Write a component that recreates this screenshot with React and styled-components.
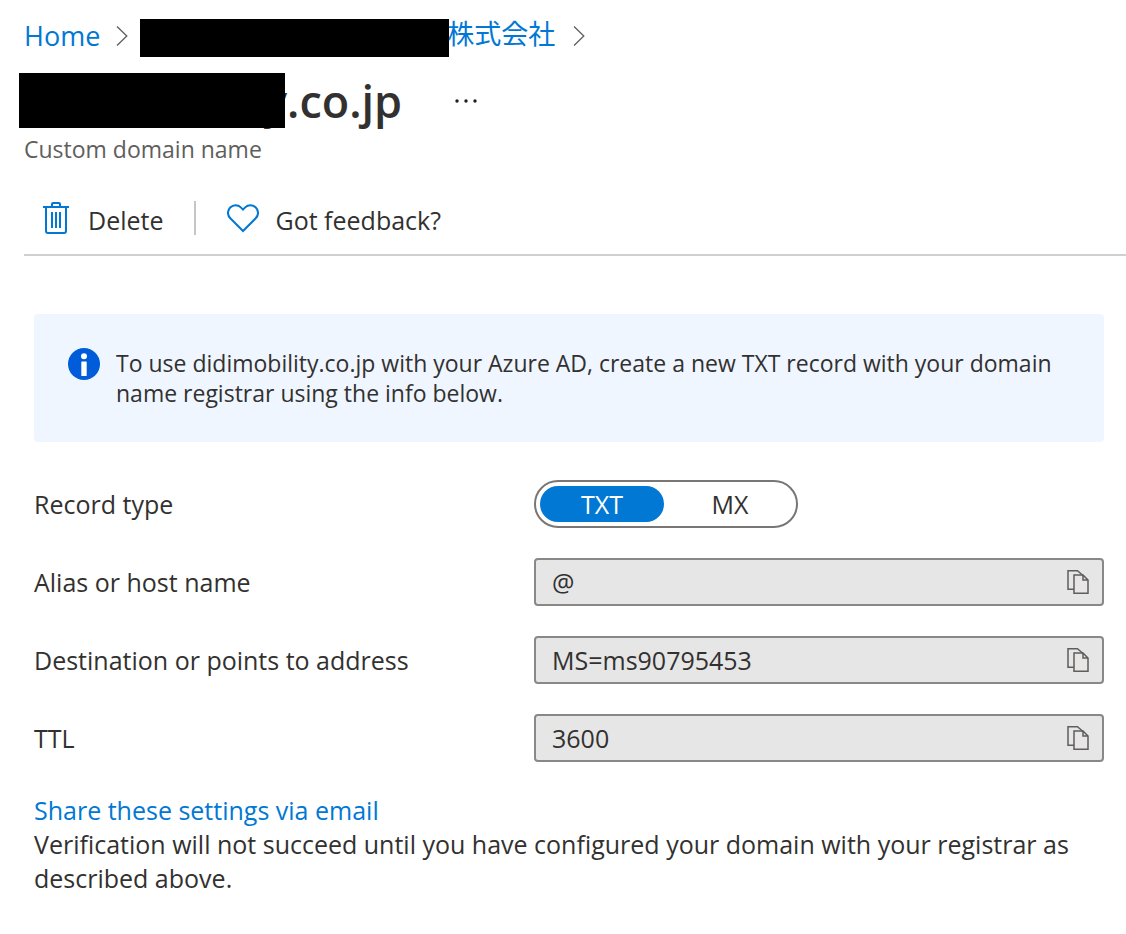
import React, { useState } from 'react';
import styled, { createGlobalStyle } from 'styled-components';

const GlobalStyle = createGlobalStyle`
  * {
    box-sizing: border-box;
  }

  body {
    margin: 0;
    background: #fff;
    color: #323130;
    font-family: 'Open Sans', 'Noto Sans CJK JP', sans-serif;
    font-size: 25px;
    line-height: 34px;
  }

  button,
  input {
    font: inherit;
    color: inherit;
  }
`;

const Page = styled.div`
  padding: 16px 0 36px;
`;

const Breadcrumb = styled.nav`
  display: flex;
  align-items: center;
  height: 40px;
  padding-left: 24px;
`;

const Crumb = styled.a`
  display: flex;
  align-items: center;
  color: #0078d4;
  font-size: 27px;
  line-height: 36px;
  text-decoration: none;
`;

const Chevron = styled.svg`
  flex: none;
  width: 12px;
  height: 20px;
  margin: 0 12px 0 16px;
`;

const Redacted = styled.span`
  position: relative;
  z-index: 1;
  flex: none;
  width: ${({ $width }) => $width}px;
  height: ${({ $height }) => $height}px;
  margin-right: -${({ $overlap }) => $overlap}px;
  background: #000;
`;

const CompanyCrumb = styled(Crumb)`
  align-items: flex-start;
  height: 34px;
  margin-right: 2px;
  line-height: 30px;
`;

const TitleRow = styled.div`
  display: flex;
  align-items: center;
  margin-top: 17px;
  padding-left: 19px;
`;

const Title = styled.h1`
  display: flex;
  align-items: center;
  margin: 0;
  font-size: 45px;
  line-height: 55px;
  font-weight: 600;
`;

const MoreButton = styled.button`
  display: flex;
  margin-left: 48px;
  padding: 4px;
  border: 0;
  background: none;
`;

const Subtitle = styled.p`
  margin: 5px 0 0 24px;
  color: #605e5c;
  font-size: 23px;
  line-height: 32px;
`;

const Toolbar = styled.div`
  display: flex;
  align-items: center;
  height: 74px;
  margin: 17px 0 0 24px;
  padding-left: 16px;
  border-bottom: 2px solid #d2d0ce;
`;

const ToolButton = styled.button`
  display: flex;
  align-items: center;
  gap: 16px;
  padding: 0;
  border: 0;
  background: none;
`;

const ToolLabel = styled.span`
  padding-top: 4px;
`;

const Separator = styled.span`
  width: 2px;
  height: 34px;
  margin: 0 31px;
  background: #c8c6c4;
`;

const Content = styled.main`
  padding: 58px 22px 0 34px;
`;

const InfoBar = styled.div`
  display: flex;
  gap: 16px;
  padding: 34px 40px 34px 34px;
  border-radius: 4px;
  background: #eff6ff;
  font-size: 23px;
  line-height: 30px;

  svg {
    flex: none;
  }

  p {
    margin: 0;
  }
`;

const Form = styled.div`
  display: flex;
  flex-direction: column;
  gap: 30px;
  margin-top: 38px;
`;

const Row = styled.div`
  display: flex;
  align-items: center;
  min-height: 48px;
`;

const Label = styled.label`
  flex: none;
  width: 500px;
`;

const Toggle = styled.div`
  display: flex;
  gap: 4px;
  width: 264px;
  height: 48px;
  padding: 4px;
  border: 2px solid #797775;
  border-radius: 24px;
`;

const ToggleButton = styled.button`
  flex: 1;
  padding: 0;
  border: 0;
  border-radius: 18px;
  background: ${({ $active }) => ($active ? '#0078d4' : 'transparent')};
  color: ${({ $active }) => ($active ? '#fff' : '#323130')};
  line-height: 36px;
`;

const Field = styled.div`
  display: flex;
  flex: 1;
  align-items: center;
  height: 48px;
  padding: 0 13px 0 16px;
  border: 2px solid #8a8886;
  border-radius: 4px;
  background: #e6e6e6;
`;

const FieldInput = styled.input`
  flex: 1;
  min-width: 0;
  padding: 0;
  border: 0;
  outline: 0;
  background: none;
`;

const CopyButton = styled.button`
  display: flex;
  padding: 0;
  border: 0;
  background: none;
`;

const ShareLink = styled.a`
  display: inline-block;
  margin-top: 31px;
  color: #0078d4;
  text-decoration: none;
`;

const Note = styled.p`
  margin: 0;
`;

const ChevronIcon = () => (
  <Chevron viewBox="0 0 12 20" fill="none" stroke="#605e5c" strokeWidth="1.3" aria-hidden="true">
    <path d="M1 0.5 10.8 10 1 19.5" />
  </Chevron>
);

const MoreIcon = () => (
  <svg width="24" height="6" viewBox="0 0 24 6" fill="#201f1e" aria-hidden="true">
    <circle cx="3" cy="3" r="1.7" />
    <circle cx="12" cy="3" r="1.7" />
    <circle cx="21" cy="3" r="1.7" />
  </svg>
);

const TrashIcon = () => (
  <svg width="32" height="32" viewBox="0 0 32 32" fill="none" stroke="#0078d4" strokeWidth="2" aria-hidden="true">
    <path d="M3 5H29M12 5V2Q12 1 13 1H19Q20 1 20 2V5M6 5V29Q6 31 8 31H24Q26 31 26 29V5M12 10V26M16 10V26M20 10V26" />
  </svg>
);

const HeartIcon = () => (
  <svg width="32" height="32" viewBox="0 0 32 32" fill="none" stroke="#0078d4" strokeWidth="2" aria-hidden="true">
    <path d="M16 29 3.3 16.3C.2 13.2 .2 8.5 3.2 5.5 6.2 2.5 10.9 2.5 13.8 5.4L16 7.6 18.2 5.4C21.1 2.5 25.8 2.5 28.8 5.5 31.8 8.5 31.8 13.2 28.7 16.3Z" />
  </svg>
);

const InfoIcon = () => (
  <svg width="32" height="32" viewBox="0 0 32 32" aria-hidden="true">
    <circle cx="16" cy="16" r="16" fill="#015cda" />
    <circle cx="16" cy="8.3" r="3" fill="#fff" />
    <rect x="13.3" y="13.5" width="5.4" height="14.5" rx="0.5" fill="#fff" />
  </svg>
);

const CopyIcon = () => (
  <svg width="22" height="24" viewBox="0 0 22 24" fill="none" stroke="#605e5c" strokeWidth="1.5" aria-hidden="true">
    <path d="M7 19.2H1V.8H10.5L16 5.5" />
    <path d="M7 5H16L21 10V23.2H7ZM16 5V10H21" />
  </svg>
);

const records = [
  { id: 'alias', label: 'Alias or host name', value: '@' },
  { id: 'destination', label: 'Destination or points to address', value: 'MS=ms90795453' },
  { id: 'ttl', label: 'TTL', value: '3600' },
];

const App = () => {
  const [recordType, setRecordType] = useState('TXT');

  return (
    <Page>
      <GlobalStyle />
      <Breadcrumb>
        <Crumb href="#home">Home</Crumb>
        <ChevronIcon />
        <CompanyCrumb href="#company">
          <Redacted $width={309} $height={38} $overlap={2} />
          株式会社
        </CompanyCrumb>
        <ChevronIcon />
      </Breadcrumb>
      <TitleRow>
        <Title>
          <Redacted $width={266} $height={55} $overlap={22} />
          y.co.jp
        </Title>
        <MoreButton aria-label="More">
          <MoreIcon />
        </MoreButton>
      </TitleRow>
      <Subtitle>Custom domain name</Subtitle>
      <Toolbar>
        <ToolButton>
          <TrashIcon />
          <ToolLabel>Delete</ToolLabel>
        </ToolButton>
        <Separator />
        <ToolButton>
          <HeartIcon />
          <ToolLabel>Got feedback?</ToolLabel>
        </ToolButton>
      </Toolbar>
      <Content>
        <InfoBar>
          <InfoIcon />
          <p>
            To use didimobility.co.jp with your Azure AD, create a new TXT record with your domain name registrar
            using the info below.
          </p>
        </InfoBar>
        <Form>
          <Row>
            <Label as="span" id="record-type">Record type</Label>
            <Toggle role="group" aria-labelledby="record-type">
              {['TXT', 'MX'].map((type) => (
                <ToggleButton
                  key={type}
                  $active={recordType === type}
                  aria-pressed={recordType === type}
                  onClick={() => setRecordType(type)}
                >
                  {type}
                </ToggleButton>
              ))}
            </Toggle>
          </Row>
          {records.map(({ id, label, value }) => (
            <Row key={id}>
              <Label htmlFor={id}>{label}</Label>
              <Field>
                <FieldInput id={id} value={value} readOnly />
                <CopyButton aria-label={`Copy ${label}`} onClick={() => navigator.clipboard.writeText(value)}>
                  <CopyIcon />
                </CopyButton>
              </Field>
            </Row>
          ))}
        </Form>
        <ShareLink href="#share">Share these settings via email</ShareLink>
        <Note>
          Verification will not succeed until you have configured your domain with your registrar as described above.
        </Note>
      </Content>
    </Page>
  );
};

export default App;
